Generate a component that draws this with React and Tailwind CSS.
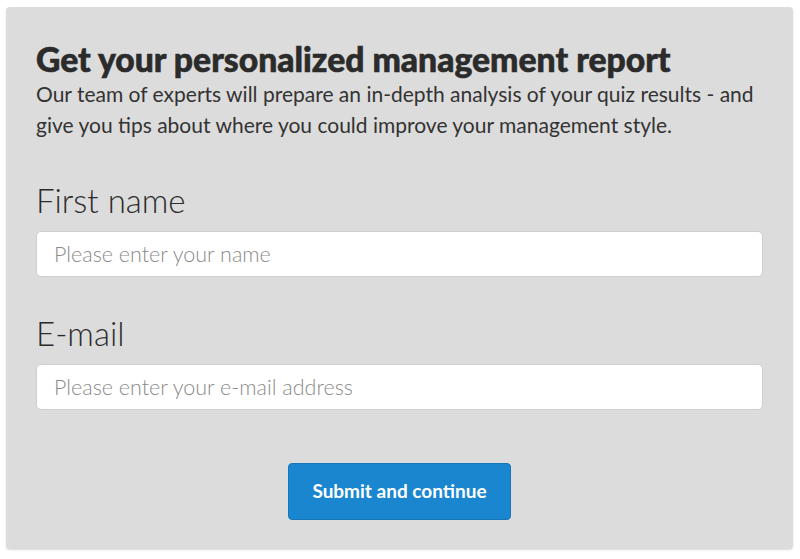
export default function App() {
  return (
    <div className="min-h-[559px] bg-white pt-[7px] pl-[6px] pr-[7px] pb-[10px] font-['Lato',sans-serif]">
      <div className="bg-[#dcdcdc] rounded-[4px] shadow-[0_1px_2px_rgba(0,0,0,0.15)] px-[30px] pt-[32px] pb-[29px]">
        <h1 className="text-[33.7px] leading-[40px] font-black text-[#2b2b2b] [-webkit-text-stroke:0.6px_#2b2b2b]">
          Get your personalized management report
        </h1>
        <p className="text-[21px] leading-[31px] text-[#333] -mt-[1px]">
          Our team of experts will prepare an in-depth analysis of your quiz results - and give you tips about where you could improve your management style.
        </p>

        <label className="block mt-[40px] text-[33px] leading-[40px] font-light text-[#2b2b2b]">
          First name
        </label>
        <input
          type="text"
          placeholder="Please enter your name"
          className="mt-[11px] block w-full h-[46px] rounded-[5px] bg-white border border-[#cfcfcf] px-[17px] text-[21.5px] font-light text-[#333] placeholder:text-[#8a8a8a] outline-none"
        />

        <label className="block mt-[36px] text-[33px] leading-[40px] font-light text-[#2b2b2b]">
          E-mail
        </label>
        <input
          type="email"
          placeholder="Please enter your e-mail address"
          className="mt-[11px] block w-full h-[46px] rounded-[5px] bg-white border border-[#cfcfcf] px-[17px] text-[21.5px] font-light text-[#333] placeholder:text-[#8a8a8a] outline-none"
        />

        <div className="flex justify-center mt-[53px]">
          <button className="w-[223px] h-[57px] rounded-[4px] bg-[#1a86d0] border border-[#1676b8] text-white text-[19px] font-bold">
            Submit and continue
          </button>
        </div>
      </div>
    </div>
  );
}
